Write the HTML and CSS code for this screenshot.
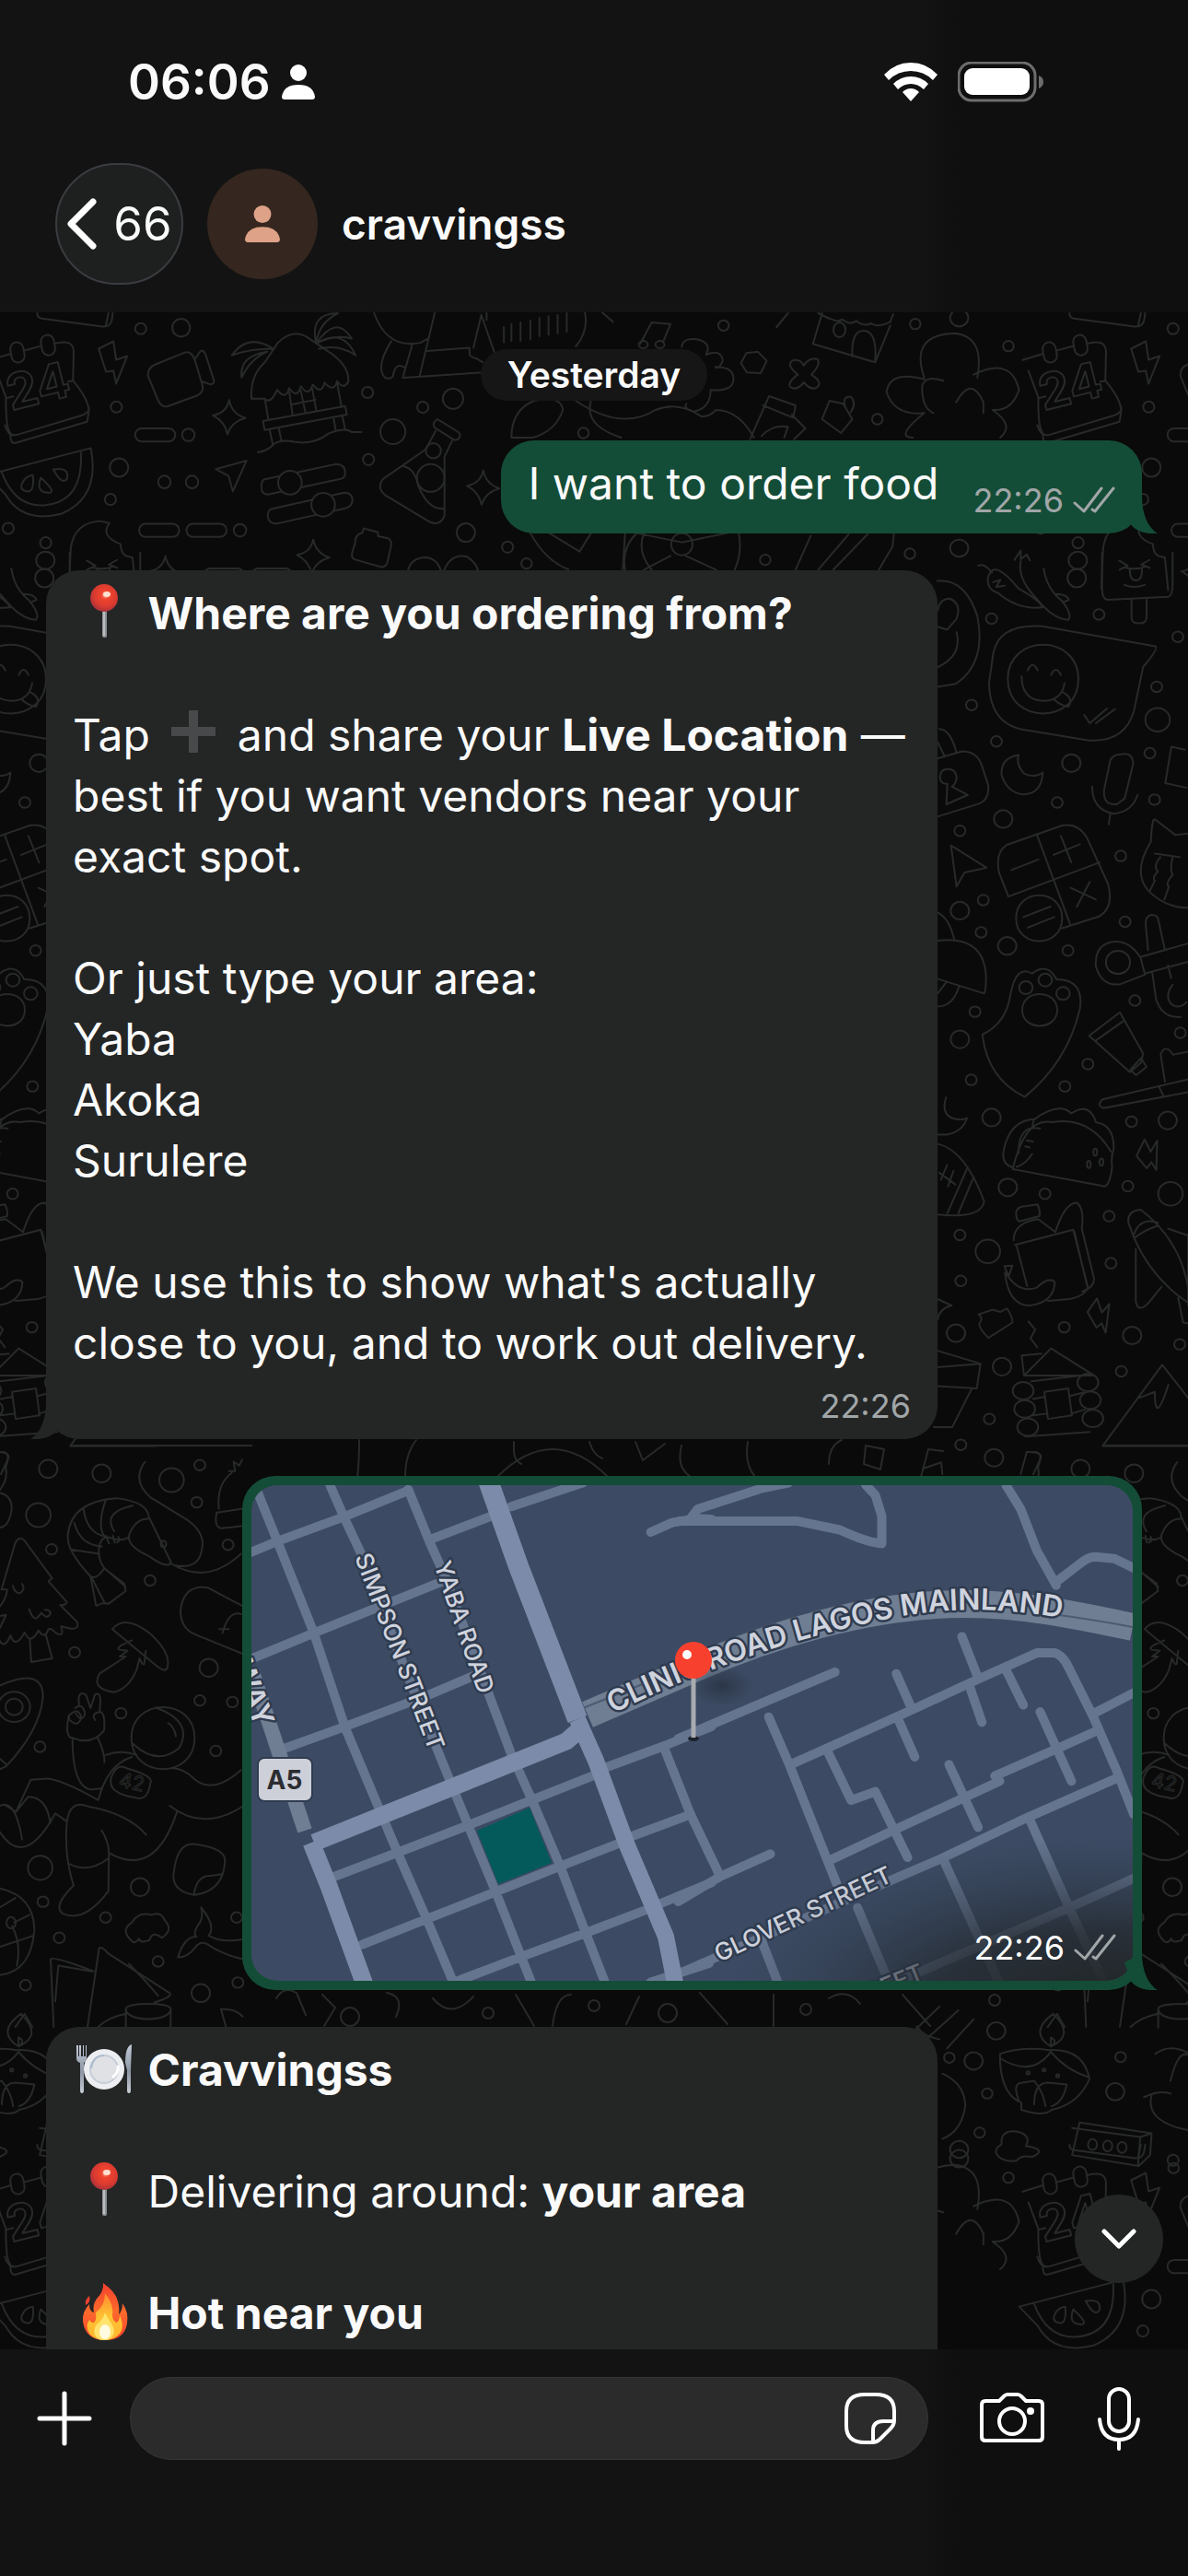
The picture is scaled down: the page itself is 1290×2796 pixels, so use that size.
FILE: index.html
```html
<!DOCTYPE html>
<html lang="en">
<head>
<meta charset="utf-8">
<meta name="viewport" content="width=device-width, initial-scale=1">
<title>cravvingss</title>
<link rel="stylesheet" href="styles.css">
</head>
<body>
<svg class="sprite" aria-hidden="true">
  <defs>
    <radialGradient id="pin-red" cx=".55" cy=".4" r=".6"><stop offset="0" stop-color="#ffb49a"/><stop offset=".25" stop-color="#f0442e"/><stop offset=".7" stop-color="#d93a30"/><stop offset="1" stop-color="#a8323a"/></radialGradient>
    <linearGradient id="flame" x1="0" y1="0" x2="0" y2="1"><stop offset="0" stop-color="#f4402c"/><stop offset=".5" stop-color="#fb6a2c"/><stop offset="1" stop-color="#f8402c"/></linearGradient>
    <linearGradient id="flame-in" x1="0" y1="0" x2="0" y2="1"><stop offset="0" stop-color="#ff8a2f"/><stop offset=".5" stop-color="#ffc233"/><stop offset="1" stop-color="#ffb52e"/></linearGradient>
    <linearGradient id="steel" x1="0" y1="0" x2="0" y2="1"><stop offset="0" stop-color="#c3cbd8"/><stop offset=".55" stop-color="#8b95a3"/><stop offset="1" stop-color="#c9ced6"/></linearGradient>
  </defs>
  <symbol id="pushpin" viewBox="0 0 66 66"><rect x="31" y="31" width="5" height="30" rx="2" fill="#8d9294"/><rect x="32" y="31" width="2" height="28" fill="#b9bdbf"/><circle cx="33" cy="18" r="15" fill="url(#pin-red)"/><ellipse cx="36" cy="14" rx="4" ry="3" fill="#ffe0d0"/></symbol>
  <symbol id="plus-emoji" viewBox="0 0 66 66"><path d="M28 8h10v18h19v10H38v18H28V36H9V26h19z" fill="#47494b"/></symbol>
  <symbol id="plate" viewBox="0 0 66 66"><path d="M3 8v14q0 4 4 5v30q0 3 2 3t2-3V27q3-2 3-5V8h-1v12h-2V8h-1v12H8V8H6v12H5V8z" fill="url(#steel)"/><path d="M63 7q-7 2-7 20l2 8v22q0 3 2 3t2-3V34z" fill="url(#steel)"/><circle cx="33" cy="34" r="22" fill="#eceef1"/><circle cx="33" cy="34" r="15" fill="#dfe1e4" stroke="#c6cdd8" stroke-width="2"/><path d="M19 33q2-14 14-14" fill="none" stroke="#aebccd" stroke-width="2"/><path d="M48 30q1 8-6 13" fill="none" stroke="#fff" stroke-width="3"/></symbol>
  <symbol id="fire" viewBox="0 0 66 66"><path d="M32 2q14 10 16 20 2 8 1 14 4-4 4-12 7 10 5 22-3 18-24 18T10 44q-1-11 7-19 0 8 5 9-2-8 3-15 8-8 7-17z" fill="url(#flame)"/><path d="M17 16q-5 4-4 10 6-3 4-10z" fill="#f4402c"/><path d="M34 13q10 12 8 25 1 6 5 7 3-3 3-8 6 14-1 21-6 6-16 6T17 57q-5-8 0-15 3 5 6 2 2-3 1-10 10-7 10-21z" fill="url(#flame-in)"/><path d="M34 34q4 8 7 12 5 8 1 14-3 4-9 4t-9-4q-4-6 1-13 7-5 9-13z" fill="#ffe36b"/><ellipse cx="34" cy="55" rx="6" ry="8" fill="#fffbe0"/></symbol>
  <symbol id="ticks" viewBox="0 0 46 30"><path d="M2 18l10 9L31 2M21 25l3 2L44 2" fill="none" stroke="currentColor" stroke-width="3" stroke-linecap="round" stroke-linejoin="round"/></symbol>
  <symbol id="person" viewBox="0 0 36 38"><ellipse cx="18" cy="9" rx="9" ry="9"/><path d="M0 35Q2 22 18 22T36 35Q36 38 33 38H3Q0 38 0 35z"/></symbol>
  <symbol id="tail" viewBox="0 0 36 40"><path d="M19 0C19 20 26 34 36 40 24 41 12 38 7 30L0 10z"/></symbol>
</svg>

<header class="topbar">
  <div class="status">
    <span class="clock">06:06</span>
    <svg class="status-person" fill="#fff" aria-hidden="true"><use href="#person"/></svg>
    <svg class="wifi" viewBox="0 0 58 42" fill="#fff" aria-hidden="true"><path d="M0 13Q12 0 29 0t29 13l-5 6Q43 9 29 9T5 19z"/><path d="M10 23q8-8 19-8t19 8l-5 6q-6-6-14-6t-14 6z"/><path d="M20 32q4-4 9-4t9 4l-9 10z"/></svg>
    <svg class="battery" viewBox="0 0 94 44" aria-hidden="true"><rect x="1" y="1" width="83" height="41" rx="14" fill="none" stroke="#6d6d6d" stroke-width="3"/><rect x="7" y="7" width="71" height="29" rx="9" fill="#fff"/><path d="M88 15q5 2 5 7t-5 7z" fill="#6d6d6d"/></svg>
  </div>
  <div class="contact">
    <button class="back" aria-label="Back, 66 unread chats"><svg viewBox="0 0 34 58" aria-hidden="true"><path d="M29 5L5 29l24 24" fill="none" stroke="#fff" stroke-width="7" stroke-linecap="round" stroke-linejoin="round"/></svg><span>66</span></button>
    <span class="avatar"><svg fill="#dea288" aria-hidden="true"><use href="#person"/></svg></span>
    <h1>cravvingss</h1>
  </div>
</header>

<main class="chat">
  <svg class="wallpaper" aria-hidden="true">
    <defs>
      <path id="star" d="M0-20Q3-4 19 1 3 5-2 20-5 5-19-2-3-5 0-20z"/>
      <path id="bolt" d="M-16-14L0-22 3-2 15-6 3 24 0 10-8 11z"/>
      <path id="send" d="M-18-10L18-20 2 16-3-2z"/>
      <g id="doodles">
        <g transform="translate(0 1) scale(.357)">
          <path d="M113 0q0 14 14 16l180 24q30 5 34-25l2-15M330 0l-8 36"/>
          <path d="M-30 142l60-18M75 113l48-13M168 92q55-15 56 25l-2 88q50 60 48 95l-5 30-220 65q-15 0-13-30-15-15-14-110l-30-80M222 205l-15 3M20 258l20-5M15 340q10 35 35 30l200-60q25-10 20-25"/>
          <rect x="33" y="88" width="40" height="62" rx="20" transform="rotate(-10 53 119)"/><rect x="126" y="66" width="40" height="62" rx="20" transform="rotate(-10 146 97)"/>
          <text x="34" y="296" transform="rotate(-14 34 296)">24</text>
          <use href="#bolt" transform="translate(345 147) scale(2.8)"/>
          <path d="M450 190q0-25 20-33l90-37q20-8 32 20l24 80q4 20-16 30l-90 33q-20 5-30-20zM592 140l18-25q8-5 15 10l26 80q0 12-12 11l-24-8"/>
          <path d="M765 260q-5-70 40-110l40-60q50-50 100-10l50 34q70 45 64 95-15 25-34-3-8 38-38 5-8 38-36 6-12 40-36 5-10 40-36 6-10 38-36 5-20 45-38 27zM705 128q50-70 126-20-70 0-126 20zM735 195q-8-65 78-78-50 20-78 78zM962 92Q940 0 1028 0q-60 30-66 92 60-90 108-15-50-15-108 15 80-50 120 36-50-35-112-20M806 262l10 60M880 240l10 70M950 230l12 66M915 236l14 66M885 278l75-15M1025 208l14 78M800 328l250-46 5 26-250 47zM820 355l10 45M848 350l8 38M1015 320l6 36M1042 316l8 38M784 422q25 0 50-25 20-15 60-6 60 10 105-25 50-20 70-5l30 0"/>
          <use href="#star" transform="translate(697 316) scale(2.6)"/><use href="#send" transform="translate(703 500) scale(2.6)"/>
          <rect x="411" y="350" width="122" height="40" rx="20"/><rect x="423" y="640" width="122" height="40" rx="20"/><rect x="567" y="640" width="122" height="40" rx="20"/><rect x="620" y="776" width="122" height="40" rx="20"/><rect x="766" y="776" width="122" height="40" rx="20"/>
          <path d="M-40 492L276 410q30 150-90 200-120 30-170-60zM4 480q40 110 130 104 120-10 112-160M66 520q10-26 34-28 6 60-24 48-14-5-10-20zM124 500q50 45 24 46-40 0-24-46zM162 475q50-8 42 28-15 22-42-28z"/>
          <path d="M805 505l215-46q30 0 30 26 0 18-20 20l-215 46q-20 0-20-23 0-20 10-23zM825 595l215-48q30-5 32 20 0 20-22 26l-205 46q-25 3-30-18-2-20 10-26z" fill="#0a0a0a"/><circle cx="882" cy="515" r="36" fill="#0a0a0a"/><circle cx="983" cy="582" r="36" fill="#0a0a0a"/>
          <path d="M1330 322l62 38q12 8 4 20-6 8-16 4l-55-34q-15-14 5-28zM1325 358l-30 56-130 90q-20 25 5 48l140 84q30 10 42-20l0-180 25-52M1222 464q40 5 50 60 30 75 80 70"/><circle cx="1318" cy="418" r="23"/><circle cx="1310" cy="501" r="42"/>
          <path d="M1138 0q40 110 140 90l22-12M1322 0l-45 188M1225 196l30-105M1190 85q-50 80-18 112 25 5 25-15 8-32 32-18M1298 115l130-10v20q5 10 20 12l20 12M1228 196l240-16M1440 105l24-100 40 115M1480 20l0-20"/>
          <path d="M1080 700q0-30 22-32l4-14 44 12v12l30 6q15 8 8 30l-10 45q-6 15-20 12l-78-22q-14-4-8-24z"/>
          <path d="M210 836l5-120q10-80 90-84l28 6q-30 40 34 64 0 40 36 40l10 100M264 752l26 16-25 12M356 750l-25 14 26 10M280 826q30 12 62 0"/>
          <use href="#star" transform="translate(503 790) scale(2.6)"/><use href="#star" transform="translate(953 740) scale(2.6)"/><use href="#star" transform="translate(1470 530) scale(2.6)"/>
          <path d="M1240 836q-12-90 50-94 45 0 55 56 20-70 75-58 50 30 34 96M1455 800q40 0 70 40"/>
          <circle cx="428" cy="47" r="17"/><circle cx="551" cy="44" r="27"/><circle cx="354" cy="285" r="17"/><circle cx="573" cy="370" r="19"/><circle cx="362" cy="469" r="28"/><circle cx="500" cy="513" r="19"/><circle cx="584" cy="513" r="19"/><circle cx="336" cy="566" r="17"/><circle cx="730" cy="660" r="19"/><circle cx="1118" cy="241" r="17"/><circle cx="1378" cy="260" r="31"/><circle cx="1286" cy="286" r="17"/><circle cx="1195" cy="360" r="38"/><circle cx="1121" cy="445" r="17"/><circle cx="25" cy="654" r="17"/><circle cx="139" cy="698" r="17"/><circle cx="135" cy="805" r="28"/><circle cx="1417" cy="667" r="28"/><circle cx="1544" cy="711" r="17"/><circle cx="1035" cy="838" r="26"/>
        </g>
        <g transform="translate(0 -9) scale(.8227 .3333)">
          <path d="M665 75v50M675 65v55M687 60v60M700 55v60M712 45v60M724 40v60M736 35v60M748 30v60M772 28q5 60-12 110M795 28l14 30M845 130l15-70 25 5-10 60"/><ellipse cx="849" cy="132" rx="6" ry="12"/><ellipse cx="871" cy="132" rx="6" ry="12"/>
          <path d="M900 140q0-30 20-25 20 10 12 50 20-20 22 20-5 30-10 20 25 0 24 40 0 40-30 35 0 60-22 70-15-10-10-25M985 160l15-5 12 30-8 40-18-2-8-30zM1045 185q10-10 16 15 8-30 18-20 5 15-8 50 15 25 8 40-8 15-18-15-10 30-18 15-4-15 10-40-15-30-8-45zM1025 75l15-45M1085 30l-12 100 82 60 20-120M1080 30q12 15 18 20 8 10 14 0 10 20 18 5 10 20 20 8 8 15 25-5l4-25M1125 170q-2-90 18-82 15 10 12 100"/>
          <path d="M1220 245q-45-30-50 40 10 80 50 70-40 80-15 80M1220 240q-20-140 40-145 40 10 30 145M1245 250q-25-20-28 20 0 70 15 85M1285 230q50-60 60 50-10 70-35 65 30 50 10 90M1262 320q20-90 36 0l0 35"/>
          <path d="M675 435q0-90 30-120 35-20 38 30-10 70-40 90zM780 315q-10 80 40 120M760 315q60 100 105 30 30-30 60 20 10 5 20-20 30 0 50 90M990 440l25-140 35 30-3 40-40-40M1005 430q15-40 35-30l-5 35M1045 360l18 45-15 35M1085 375l10-60 18 10 12 50-15 45zM1115 330q-3-30 8-28 8 20 0 50"/>
          <path d="M700 746q20 90 50 118M725 746l40 60 15-60M825 865q-5-70 15-118M860 865q-20-60-10-118M975 746q5 60-5 118M840 746l60 30 60-30M905 820l40 45M885 820l-35 45M1050 865l20-110M1080 865l40-115M1100 865l45-115M1160 865l18-75 2-44M825 746l-3 118"/><ellipse cx="900" cy="782" rx="14" ry="36"/>
          <ellipse cx="955" cy="70" rx="7" ry="17"/><ellipse cx="1108" cy="84" rx="8" ry="24"/><ellipse cx="1208" cy="65" rx="7" ry="17"/><ellipse cx="1266" cy="45" rx="12" ry="28"/><ellipse cx="1331" cy="137" rx="7" ry="17"/><ellipse cx="1158" cy="375" rx="7" ry="17"/><ellipse cx="770" cy="420" rx="7" ry="17"/><ellipse cx="695" cy="845" rx="7" ry="17"/><ellipse cx="1010" cy="833" rx="7" ry="17"/><ellipse cx="1201" cy="813" rx="7" ry="17"/><ellipse cx="1266" cy="795" rx="12" ry="28"/>
        </g>
        <g transform="translate(1000 261) scale(.3333 .6378)">
          <path d="M187 22q20-5 44 12M250 68q-35-5-32-25 10-20 40-12 30 10 60 30 70 20 78 32-80 5-146-25zM235 50l24-4-14 12 28-2M305 12l20-16 0 15 20-8 10 10M325 14q-10 30 45 60 60 40 110 40 15-8-20-32-50-20-60-55M440 70q35 0 42 10l-20 5"/>
          <path d="M590 0v60q0 20 20 20l195-5q15-2 15-22V0M665 25q35 5 70-2M680 27q0 20 20 20 22 0 20-20M686 80v30q0 10 25 10 24 0 24-10V80"/>
          <path d="M54 48q90-5 130 60 30 80-70 115l-60 5M55 98q5-20 40-20 40 10 20 35l-30 18-30-5M116 135q20 40-62 60"/>
          <path d="M236 170q20-50 160-45l368 34q10 5-40 35l-30 75q-30 55-150 50l-210-18q-110-10-112-80zM283 215c0-78 230-78 230 0s-230 78-230 0zM348 200q15-18 32 0M424 208q15-18 32 0M328 210q0 40 70 42 60 0 70-30M435 250q20 10 45 12 20-15-20-25M532 276l18 14 56-25M570 290l62-24"/>
          <path d="M54 350l80-12q50 0 65 25l20 32q5 25-30 32l-135 22M54 322l24 25M60 300q35 0 56 40M62 382q0-14 26-14t28 14q0 10-15 16l52 14-70 16 3-35q-24 0-24-11z"/>
          <path d="M318 344q-60 5-55 35 20 30 70 32 60 0 64-37-25 10-60 2-28-15-19-32zM598 400q-10 30 40 28l26-10 28-60q-5-20-40-15-25 0-35 10zM558 398q0 40 70 46 60-3 78-32M617 444l-5 18M860 335l-44-5-20 62 70 8"/>
          <path d="M98 498l18 70 26-24 72-8zM285 585l-30-40q-15-35 25-48l180-33q50-5 80 20l70 80q20 40-30 55l-120 20M378 480l108 152M285 585l297-58M295 540l88-18M432 514l86-18M456 482l34 45M488 570l82 20M508 602l42-42M310 622c0-52 150-52 150 0s-150 52-150 0zM334 620l88-18M348 638l86-18"/>
          <path d="M870 478l-42 2-65-26q-10-5-14 38-60 50-10 82 60 32 140 30M762 512l82 6M780 518q-25 15-8 25-20 10-10 15l-15 16M820 518q-10 20 0 30-25 15-12 20l-15 22"/>
          <path d="M715 688q-40-30-90-26-60 5-55 42 20 35 80 30l80-16zM603 697c0-26 78-26 78 0s-78 26-78 0zM715 688l160-24M730 716l140-20M740 676l-8-45q0-14 20-15 20 0 22 10l20 48M754 715l12 45q20 32 80 30M805 702l10 22M820 735c-40 25 10 50 45 30M54 612q40 10 55 48M54 660q150-10 158 60 0 25-6 30l-152-25M54 772q50 0 70-34M54 750l30-20"/>
          <path d="M200 820q80-20 92-70 20-50 70-34 50-20 80 10 90 0 76 50-40 90-180 150-120-30-138-106zM330 778c0-36 114-36 114 0s-114 36-114 0zM548 822l100-40 76 70-7 16-36 16zM570 830l92-34M682 880l35-20 18 15-34 14zM795 900l-14-46q15-20 40 0l50-5M592 930l280-34M775 908l14 15M870 918l-275 27q-25-5-3-15"/>
          <path d="M54 990l32 0q50-5 64-28-20 5-50 0-35-10-18-35M54 1006q90 10 152 98-10 30-152 22M60 1055l52 20M85 1042l-20 25M106 1052l-18 26M152 1046l-66 78M172 1062l-50 62"/>
          <path d="M300 1046q-40-5-30-30 20-50 100-52 80-30 120-10 60-20 80 15 60 5 58 46-10 15-5 30-10 40-34 32l-290-28q40-90 130-80 120-10 190 50M368 964l-5 12M318 1022q0-50 70-42M345 1000l20 2M340 1010l14 2M312 1045q30-5 50-22"/>
          <path d="M310 1122q5-10 30-10l40-3q10 12 6 20l-66 9q-10-2-10-16zM302 1170q0-30 80-36l56 22q30-50 70-50 25 10 16 44M306 1178l190-26 48 98q-10 15-60 20l-70 3M312 1180l34 68M500 1155l40 90M524 1150l40 85q0 15-38 22M272 1214l26-1-12 18zM274 1225q10 55 80 56 80-5 82-40-20-10-60 10-60 10-100-26"/>
          <path d="M54 1270l46 11q-40 5-46 24M188 1296l46-8 24 4 22-6q20 15 18 24l-78 26q-30-15-30-24 15-10-2-16zM676 1140q-5-20 40-22 150 60 160 160-120-40-180-110zM700 1185v90q10 20 44 0l40-26M694 1160q20-30 78-20M698 1165q40-15 76-20M838 1268l16 42 20 2M805 1150l65 12M870 1160v120"/>
          <path d="M54 1358l140 22-12 42-128-4M194 1380l-140 6M166 1422l-64 66-60 0M350 1308l22 14-15 15 22 15M336 1400l-8-34 64-3M336 1400l88-46 140 46zM360 1410l160-10M365 1440l40-4M485 1435l44-6M365 1468l44-3M490 1465l44-7M340 1504l210-8M402 1428l78-6 12 46-78 6z"/><ellipse cx="333" cy="1426" rx="34" ry="15"/><ellipse cx="338" cy="1457" rx="34" ry="15"/><ellipse cx="348" cy="1488" rx="34" ry="15"/><ellipse cx="544" cy="1412" rx="34" ry="15"/><ellipse cx="552" cy="1442" rx="34" ry="15"/><ellipse cx="560" cy="1473" rx="34" ry="15"/>
          <path d="M592 1520l194-138 84 56M712 1438l50-10q0 60 44-12M592 1520h280M325 1568l20-38q50 0 46 10l-25 28M10 1558l56-10 4 20"/>
          <use href="#bolt" transform="translate(744 1025) rotate(-30) scale(2.3 1.4)"/><use href="#bolt" transform="translate(584 1298) rotate(-20) scale(2.3 1.4)"/>
          <ellipse cx="511" cy="13" rx="30" ry="15"/><ellipse cx="230" cy="112" rx="18" ry="9"/><ellipse cx="580" cy="105" rx="18" ry="9"/><ellipse cx="837" cy="143" rx="18" ry="9"/><ellipse cx="768" cy="228" rx="18" ry="9"/><ellipse cx="771" cy="284" rx="40" ry="20"/><ellipse cx="165" cy="259" rx="18" ry="9"/><ellipse cx="246" cy="321" rx="18" ry="9"/><ellipse cx="490" cy="358" rx="30" ry="15"/><ellipse cx="746" cy="341" rx="18" ry="9"/><ellipse cx="444" cy="425" rx="18" ry="9"/><ellipse cx="761" cy="420" rx="18" ry="9"/><ellipse cx="268" cy="453" rx="30" ry="15"/><ellipse cx="127" cy="473" rx="18" ry="9"/><ellipse cx="651" cy="516" rx="18" ry="9"/><ellipse cx="203" cy="591" rx="18" ry="9"/><ellipse cx="127" cy="609" rx="30" ry="15"/><ellipse cx="665" cy="628" rx="18" ry="9"/><ellipse cx="196" cy="646" rx="18" ry="9"/><ellipse cx="281" cy="669" rx="30" ry="15"/><ellipse cx="479" cy="677" rx="18" ry="9"/><ellipse cx="342" cy="740" rx="22" ry="11"/><ellipse cx="405" cy="727" rx="22" ry="11"/><ellipse cx="463" cy="750" rx="22" ry="11"/><ellipse cx="697" cy="762" rx="18" ry="9"/><ellipse cx="845" cy="817" rx="18" ry="9"/><ellipse cx="176" cy="781" rx="18" ry="9"/><ellipse cx="127" cy="828" rx="30" ry="15"/><ellipse cx="544" cy="870" rx="18" ry="9"/><ellipse cx="164" cy="897" rx="18" ry="9"/><ellipse cx="469" cy="908" rx="18" ry="9"/><ellipse cx="230" cy="961" rx="30" ry="15"/><ellipse cx="686" cy="968" rx="18" ry="9"/><ellipse cx="804" cy="966" rx="30" ry="15"/><ellipse cx="283" cy="1080" rx="30" ry="15"/><ellipse cx="404" cy="1091" rx="18" ry="9"/><ellipse cx="674" cy="1078" rx="18" ry="9"/><ellipse cx="813" cy="1091" rx="40" ry="20"/><ellipse cx="127" cy="1161" rx="18" ry="9"/><ellipse cx="613" cy="1129" rx="18" ry="9"/><ellipse cx="218" cy="1189" rx="40" ry="20"/><ellipse cx="619" cy="1209" rx="18" ry="9"/><ellipse cx="130" cy="1239" rx="18" ry="9"/><ellipse cx="467" cy="1318" rx="18" ry="9"/><ellipse cx="114" cy="1328" rx="30" ry="15"/><ellipse cx="688" cy="1332" rx="30" ry="15"/><ellipse cx="843" cy="1347" rx="18" ry="9"/><ellipse cx="264" cy="1385" rx="30" ry="15"/><ellipse cx="653" cy="1393" rx="18" ry="9"/><ellipse cx="223" cy="1474" rx="18" ry="9"/><ellipse cx="130" cy="1518" rx="18" ry="9"/><ellipse cx="238" cy="1540" rx="30" ry="15"/>
          <circle cx="547" cy="1041" r="6"/><circle cx="588" cy="1037" r="6"/><circle cx="568" cy="1020" r="6"/>
        </g>
        <g transform="translate(0 1221) scale(.3333 .4082)">
          <path d="M0 40q40-5 18 40 10 30-18 60M0 148q50 10 34 60-10 30-34 32M240 22h580"/>
          <path d="M5 405L50 280q15-20 30-5l90 100-12 8 60 55q-5 10-22 8l55 45q8 20-20 18l-32-6q12 30-16 18-25-20-28-5-10 20-30-2-25 40-45 5-30 45-46 8-20 40-38 10M5 405h18q0 20-23 45M97 538l5 60 68-10-20-60M42 395q5 18 22 20 20-10 8-25M95 457q15 35 30 20l10-10q20 20 30 0-5-10-20-8M0 475l20-3-20 35"/>
          <path d="M295 370q-80-70-74-110 10-90 160-98 100 10 104 50l72 120q-10 20-70-15-80-30-65-60 20-40 60-40M340 348q-20-20-18-50 5-40 40-30 30 10 58-2M295 370q20 10 45-22M295 370l18 78 26-8 14 3 56-34-4-20-65-40M298 372l44 70M340 348l70 50M230 298l92 12M242 228q20 60 90 62M272 190q10 60 62 72M345 165q-30 70-5 98M372 250q-40-50 60-68M345 262l10 20M368 262l5 18M385 265q10 10-5 15"/>
          <path d="M472 66q-45 50 20 95l120 60q60 35 45 80-10 50-85 40M555 335q120 60 230-25M532 275a8 8 0 1 0 1 18 8 8 0 0 0-1-18M746 90l20 0-5-25 18 10 10-15M755 95q-50 30-42 95M706 200q-10 40 15 42l70-6M706 200l85-10"/>
          <path d="M366 510q40-40 120 10 70 50 60 90-5 20-40-5-60-40-140-95zM430 540q-60 20-40 25l25 3-25 15 20 0-85 45q-30 40 45 50 50-10 75-60l10-30q10 20 15 15l5-35M588 460q10-70 90-60l115 50M588 460q0 50 50 65l150 50M725 520q20-60 60-50M715 510h30"/>
          <path d="M0 660q140-50 140 30-10 90-120 185l-20 8M0 855l22 16"/><ellipse cx="46" cy="717" rx="52" ry="40"/><ellipse cx="46" cy="717" rx="28" ry="22"/>
          <path d="M224 740q-15 60 15 60 60 20 100-20 5-50-15-50 10-60-15-45l-14 35-15-35q-30-15-22 30M225 740q30-25 40 5-10 30-40 5zM245 720q25-15 32 15-10 25-30 0M325 730q-30 5-15 22M236 800q0 130 60 137l32-3M318 798q25 45 22 66M345 845q50-15 100 0M430 850q-80 20-110 115-130-60-175-57l-45 3-48 85-35-18M92 956q60 0 72 70M52 996l40-40M0 980q50-20 72 90M0 1050q80 100 180-50l35 20M218 1022q10-60 70-40 130 20 188 75M218 1022q-10 90 22 170-70 55-35 75 70 25 148-60l2-100q0-30-24-62M228 1135q60 25 125-15M355 1105q150 70 222-110M553 980q110 70 240 0M560 880q40 0 75 30 60 40 150-25M362 905q20-40 50-25 90 20 78 40-10 50-50 38-90-10-78-53zM428 800c0-110 206-110 206 0s-206 110-206 0zM433 815q80 60 150 12 50-70-75-108M548 760q20 10 25 35"/>
          <path d="M565 1165q10-90 70-83 100 10 98 45-5 80-100 90-70-10-68-52zM632 1214q10-50 55-48l35-4M430 1340q-40-30 0-50 20-30 65-20 30-10 42 15 30 25-10 46-30-20-40 6-30 10-35-4-10 15-22 7zM655 1250q50 50 25 75 40 20 110 10M580 1383q30 0 55-25 20-25 50-5 50 25 108 35M655 1250q10 30-12 50-15 20-3 28-40 0-60 55"/>
          <path d="M0 1200q110 20 112 110-10 110-112 120M0 1250l50-25M0 1355l110-30M46 1290l50-20M40 1300q30 50 15 105"/><circle cx="36" cy="1291" r="15"/>
          <path d="M175 1568l-10-180q5-10 140 32M180 1500l10-95 110 15M285 1568l38-210q10-5 30 15l200 105q10 10-50 25M420 1400q60 50 95 85M320 1568q30-25 90-35M410 1520c0-18 146-18 146 0v50M410 1520v50M410 1520c0 36 146 36 146 0M50 1568l30-35 25 35M720 1520q50 0 70 20M720 1520l20 60"/>
          <ellipse cx="157" cy="84" rx="30" ry="24"/><ellipse cx="331" cy="96" rx="30" ry="24"/><ellipse cx="559" cy="114" rx="40" ry="32"/><ellipse cx="651" cy="74" rx="18" ry="14"/><ellipse cx="125" cy="207" rx="40" ry="32"/><ellipse cx="641" cy="173" rx="18" ry="14"/><ellipse cx="743" cy="286" rx="18" ry="14"/><ellipse cx="168" cy="298" rx="18" ry="14"/><ellipse cx="489" cy="381" rx="18" ry="14"/><ellipse cx="243" cy="572" rx="18" ry="14"/><ellipse cx="680" cy="613" rx="30" ry="24"/><ellipse cx="651" cy="700" rx="18" ry="14"/><ellipse cx="757" cy="704" rx="18" ry="14"/><ellipse cx="394" cy="734" rx="18" ry="14"/><ellipse cx="130" cy="823" rx="18" ry="14"/><ellipse cx="703" cy="834" rx="18" ry="14"/><ellipse cx="131" cy="1145" rx="40" ry="32"/><ellipse cx="456" cy="1196" rx="30" ry="24"/><ellipse cx="140" cy="1235" rx="18" ry="14"/><ellipse cx="344" cy="1277" rx="18" ry="14"/><ellipse cx="193" cy="1331" rx="18" ry="14"/><ellipse cx="771" cy="1277" rx="18" ry="14"/><ellipse cx="515" cy="1394" rx="18" ry="14"/><ellipse cx="83" cy="1457" rx="18" ry="14"/><ellipse cx="654" cy="1478" rx="30" ry="24"/><ellipse cx="775" cy="1450" rx="18" ry="14"/>
        </g>
        <text class="small" x="128" y="1600" transform="rotate(12 128 1600)">42</text>
        <path d="M390 1224q0 25-2 40M440 1264q0-25 12-40M540 1264q60-60 120 0M558 1226v10q0 10 8 14M640 1226q4 14 14 18M690 1226l8 20 24-18M740 1230q-6 24 10 34M812 1226q-4 24 8 38M900 1250q0-20 14-26M940 1230l20 4-4 22-18-6zM1000 1264l8-30 16 2"/>
        <path d="M300 1830q8-14 22-6l10 24M350 1826l14 14-12 20M420 1824q20 4 10 26M470 1830q20 24 44-2M560 1826l20 34M600 1860q4-34 20-34M680 1858l14-30M760 1824l30 34M840 1826v34M900 1830q20-12 34 6M980 1826l30 34"/><circle cx="380" cy="1850" r="10"/><circle cx="530" cy="1846" r="6"/><circle cx="645" cy="1838" r="6"/><circle cx="725" cy="1846" r="10"/><circle cx="875" cy="1842" r="6"/><circle cx="1080" cy="1832" r="6"/>
        <g transform="translate(0 1841) scale(.8227 .3929)">
          <path d="M1244 180q30 30 30 90-5 70-30 90M1320 125q30-20 65-10 45-5 53 80-15 70-50 85-10 20-40 0v-20q-25-20-28-110zM1322 140q40 50 65-20 20 50 50 70M1387 105q-30-40 3-90 30 60-3 90zM1387 100v-20q10 10 0 25M1345 255q-10-50 5-50 0 0 15-5 12 30 15 70M1365 265q0-60 18-60l25 5q-5 50-20 60M1205 65l35-70M1225 80l40-75M1250 110l35-80M1210 50q10 30 30 35M1425 315l95 30-2 60-15 30-88-30zM1415 330l90 25M1505 355l-3 80M1505 355l15-10M1322 415q-15-20 0-40-2-40 20-35 20 10 12 40 30 10 8 30-15-5-20 10-10 5-20-5zM1525 125q20-30 45 0M1545 200q10-90 25-70M1510 245q20-20 35-10M1520 240q-10 80 60 100"/>
          <ellipse cx="1442" cy="376" rx="6" ry="15"/><ellipse cx="1462" cy="380" rx="6" ry="15"/><ellipse cx="1481" cy="384" rx="6" ry="15"/><ellipse cx="1315" cy="62" rx="12" ry="24"/><ellipse cx="1253" cy="136" rx="7" ry="14"/><ellipse cx="1285" cy="145" rx="12" ry="24"/><ellipse cx="1479" cy="134" rx="7" ry="14"/><ellipse cx="1303" cy="235" rx="7" ry="14"/><ellipse cx="1472" cy="230" rx="12" ry="24"/><ellipse cx="1293" cy="343" rx="7" ry="14"/><ellipse cx="1266" cy="415" rx="12" ry="24"/><ellipse cx="1549" cy="441" rx="7" ry="14"/><ellipse cx="1357" cy="178" rx="2" ry="4"/><ellipse cx="1378" cy="170" rx="2" ry="4"/><ellipse cx="1396" cy="186" rx="2" ry="4"/>
        </g>
      </g>
    </defs>
    <use href="#doodles" x="-1121"/><use href="#doodles"/><use href="#doodles" x="1121"/><use href="#doodles" y="1988"/><use href="#doodles" x="1121" y="1988"/>
  </svg>

  <time class="day">Yesterday</time>

  <article class="bubble out short">
    <p>I want to order food</p>
    <span class="meta"><time>22:26</time><svg class="ticks" aria-label="Delivered"><use href="#ticks"/></svg></span>
    <svg class="tail" aria-hidden="true"><use href="#tail"/></svg>
  </article>

  <article class="bubble in">
    <p><svg class="emoji" aria-label="pushpin"><use href="#pushpin"/></svg> <b>Where are you ordering from?</b></p>
    <p>Tap <svg class="emoji" aria-label="plus"><use href="#plus-emoji"/></svg> and share your <b>Live Location</b> —<br>best if you want vendors near your<br>exact spot.</p>
    <p>Or just type your area:<br>Yaba<br>Akoka<br>Surulere</p>
    <p>We use this to show what's actually<br>close to you, and to work out delivery.</p>
    <span class="meta"><time>22:26</time></span>
    <svg class="tail" aria-hidden="true"><use href="#tail"/></svg>
  </article>

  <article class="bubble out location">
    <svg class="map" viewBox="0 0 957 538" role="img" aria-label="Map of Clinic Road, Lagos Mainland">
      <defs>
        <radialGradient id="shade" gradientUnits="userSpaceOnUse" cx="0" cy="0" r="1" gradientTransform="translate(930 570) scale(420 190)"><stop offset="0" stop-color="#1f2322" stop-opacity="1"/><stop offset=".45" stop-color="#23282d" stop-opacity=".8"/><stop offset="1" stop-color="#2c3a4e" stop-opacity="0"/></radialGradient>
        <radialGradient id="drop"><stop offset="0" stop-color="#2a3445" stop-opacity=".9"/><stop offset="1" stop-color="#2a3445" stop-opacity="0"/></radialGradient>
        <path id="clinic" d="M393 248C480 203 600 161 713 141 770 132 830 133 910 150"/>
      </defs>
      <rect width="957" height="538" fill="#3c4b63"/>
      <g class="minor" transform="translate(-23 -23) scale(.3333 .37)">
        <path d="M80 62L155 230 270 490 375 775 545 1140 640 1335 725 1517M325 62L370 155 430 270 560 580 680 850 775 1060 865 1255 950 1450 985 1530M580 75L650 230 700 330 840 670 915 850 985 990 1075 1180 1160 1380 1225 1530M60 262L150 228 370 155 580 78M650 222L845 155M915 125L1150 55M60 575L275 495 690 345M160 840L375 770 640 680 810 615M340 1210L545 1140 775 1060 985 985 1180 915M1225 890L1420 825 1568 770M430 1410L640 1335 865 1255 1075 1180 1260 1115M1315 1090L1500 1028M740 1517L950 1445 1160 1375 1350 1310M1400 1290L1568 1228M1370 1520L1560 1465M1370 200L1440 172 1520 160 1568 162"/>
      </g>
      <g class="minor" transform="translate(467 -23) scale(.3508 .3763)">
        <path d="M-10 792L475 600M270 730L335 870 480 1210M335 868L450 820 700 715 920 620 1100 545H1155Q1180 550 1200 590L1275 730 1345 880 1400 1010M450 825L525 970 600 945 655 1050 700 1135M665 605L710 700M670 735L722 845M868 498L915 610M893 645L930 745M1005 595L1058 695M1110 715L1207 915M828 867L918 1048M455 1145L660 1055 985 915 970 900 1165 820 1285 770M1275 720L1400 660M5 1465L650 1200 800 1140 1070 1020 1350 905M810 1140L985 1500M1075 1020L1200 1280 1310 1500M545 1280L635 1480M250 1380L300 1500M600 1520L750 1460 1200 1280 1400 1195M-10 1262L120 1190 275 1125M-55 816L28 1011 120 1190M-5 165H360L490 190Q570 225 620 230V150L600 90 570 60M30 155L50 130 250 70 330 55M1005 62L1050 130 1100 250 1160 350M1160 340L1230 290Q1260 268 1280 268L1340 273 1400 300"/>
      </g>
      <path class="grey" d="M0 200L58 375" stroke-width="16"/>
      <path class="grey" d="M365 249L467 205C560 163 670 129 775 129 840 129 900 142 957 154" stroke-width="30"/>
      <path d="M360 242L467 199M870 140Q915 146 957 154" fill="none" stroke="#4c5b72" stroke-width="2"/>
      <g class="major">
        <path stroke-width="19" d="M68 388L342 278 358 264M65 388L84 435 124 545"/>
        <path stroke-width="22" d="M257-5L290 88 354 254"/><path stroke-width="18" d="M354 254L374 299 408 391 450 490 461 545"/>
      </g>
      <path d="M245 375L302 350 326 410 268 433z" fill="#045a5b"/>
      <g class="street">
        <text x="112" y="78" transform="rotate(69 112 78)">SIMPSON STREET</text>
        <text x="198" y="86" transform="rotate(71 198 86)">YABA ROAD</text>
        <text x="508" y="518" transform="rotate(-25 508 518)">GLOVER STREET</text>
        <text x="732" y="536" text-anchor="end" transform="rotate(-22 732 536)">STREET</text>
      </g>
      <g class="road"><text x="4" y="264" text-anchor="end" transform="rotate(70 4 264)">WAY</text><text><textPath href="#clinic">CLINIC ROAD LAGOS MAINLAND</textPath></text></g>
      <rect x="7" y="296" width="59" height="47" rx="7" fill="#cdd0d9" stroke="#2f3b4f" stroke-width="2"/>
      <text class="shield" x="36" y="330" text-anchor="middle">A5</text>
      <ellipse cx="511" cy="218" rx="34" ry="22" fill="url(#drop)"/>
      <ellipse cx="480" cy="275" rx="6" ry="3" fill="#1c222c"/><path d="M480 206v68" stroke="#a9abb0" stroke-width="5"/>
      <circle cx="480" cy="190" r="20" fill="#f8402f"/><circle cx="473" cy="184" r="5" fill="#fff"/>
      <rect width="957" height="538" fill="url(#shade)"/>
    </svg>
    <span class="meta"><time>22:26</time><svg class="ticks" aria-label="Delivered"><use href="#ticks"/></svg></span>
    <svg class="tail" aria-hidden="true"><use href="#tail"/></svg>
  </article>

  <article class="bubble in continued">
    <p><svg class="emoji" aria-label="plate"><use href="#plate"/></svg> <b>Cravvingss</b></p>
    <p><svg class="emoji" aria-label="pushpin"><use href="#pushpin"/></svg> Delivering around: <b>your area</b></p>
    <p><svg class="emoji" aria-label="fire"><use href="#fire"/></svg> <b>Hot near you</b></p>
  </article>

  <button class="jump" aria-label="Scroll to latest"><svg viewBox="0 0 38 22" aria-hidden="true"><path d="M3 3l16 16L35 3" fill="none" stroke="#fff" stroke-width="5" stroke-linecap="round" stroke-linejoin="round"/></svg></button>
</main>

<footer class="composer">
  <button class="plus" aria-label="Attach"><svg viewBox="0 0 60 60" aria-hidden="true"><path d="M30 3v54M3 30h54" stroke="#fff" stroke-width="5" stroke-linecap="round"/></svg></button>
  <div class="field">
    <input type="text" aria-label="Message">
    <button class="sticker" aria-label="Stickers"><svg viewBox="0 0 56 56" aria-hidden="true"><path d="M22 2h12q20 0 20 18v10q0 5-4 9L39 50q-4 4-9 4h-8Q2 54 2 36V20Q2 2 22 2zM31 53V41q0-10 11-10h12" fill="none" stroke="#fff" stroke-width="4" stroke-linejoin="round"/></svg></button>
  </div>
  <button class="camera" aria-label="Camera"><svg viewBox="0 0 70 56" aria-hidden="true"><path d="M6 9h15l5-5q2-2 4-2h11q2 0 4 2l5 5h14q4 0 4 4v35q0 4-4 4H6q-4 0-4-4V13q0-4 4-4z" fill="none" stroke="#fff" stroke-width="4"/><circle cx="35" cy="31" r="14" fill="none" stroke="#fff" stroke-width="4"/><circle cx="55" cy="20" r="4" fill="#fff"/></svg></button>
  <button class="mic" aria-label="Voice message"><svg viewBox="0 0 48 70" aria-hidden="true"><rect x="13" y="3" width="22" height="46" rx="11" fill="none" stroke="#fff" stroke-width="4"/><path d="M3 36q2 22 21 22t21-22M24 58v10" fill="none" stroke="#fff" stroke-width="4" stroke-linecap="round"/></svg></button>
</footer>
</body>
</html>
```
FILE: styles.css
```css
* { box-sizing: border-box; }

body {
  margin: 0;
  height: 100vh;
  display: flex;
  flex-direction: column;
  background: #0a0a0a;
  color: #fafafa;
  font-family: Inter, "Liberation Sans", sans-serif;
  font-size: 48px;
  line-height: 66px;
}

p, h1 { margin: 0; }
b { font-weight: 700; }
svg { display: block; flex: none; }

button {
  flex: none;
  padding: 0;
  border: 0;
  background: none;
  color: inherit;
  font: inherit;
}

.sprite { position: absolute; width: 0; height: 0; }

/* Top bar */
.topbar {
  flex: none;
  padding-bottom: 30px;
  background: linear-gradient(to right, #131313 77%, #0f0f0f 81%);
}

.status {
  display: flex;
  align-items: center;
  height: 177px;
  padding: 0 156px 0 139px;
}

.clock { font-size: 53px; font-weight: 600; }
.status-person { width: 36px; height: 38px; margin-left: 12px; }
.wifi { width: 58px; height: 42px; margin-left: auto; }
.battery { width: 94px; height: 44px; margin-left: 22px; }

.contact {
  display: flex;
  align-items: center;
  padding: 0 60px;
}

.back {
  display: flex;
  align-items: center;
  justify-content: center;
  gap: 17px;
  width: 139px;
  height: 132px;
  border: 2px solid #3a3c40;
  border-radius: 66px;
  background: #1e2020;
  font-size: 51px;
}

.back svg { width: 34px; height: 58px; }

.avatar {
  display: grid;
  place-items: center;
  width: 120px;
  height: 120px;
  margin: 0 26px;
  border-radius: 50%;
  background: #35271f;
}

.avatar svg { width: 38px; height: 40px; }

h1 { font-size: 46px; font-weight: 600; }

/* Conversation */
.chat {
  position: relative;
  flex: 1;
  min-height: 0;
  display: flex;
  flex-direction: column;
  align-items: flex-start;
  gap: 40px;
  padding: 40px 50px 0;
  overflow: hidden;
}

.wallpaper {
  position: absolute;
  inset: 0;
  width: 100%;
  height: 100%;
  fill: none;
  stroke: #282a2a;
  stroke-width: 2px;
  stroke-linecap: round;
  stroke-linejoin: round;
}

.wallpaper path, .wallpaper circle, .wallpaper ellipse,
.wallpaper rect, .wallpaper text { vector-effect: non-scaling-stroke; }
.wallpaper text { font-size: 150px; font-weight: 700; }
.wallpaper .small { font-size: 22px; font-weight: 400; stroke-width: 1px; }

.day {
  position: relative;
  align-self: center;
  padding: 0 29px;
  border-radius: 28px;
  background: #161616;
  font-size: 39px;
  font-weight: 600;
  line-height: 56px;
}

.day + .bubble { margin-top: 3px; }

.bubble {
  position: relative;
  flex: none;
  max-width: 100%;
  padding: 14px 29px;
  border-radius: 36px;
}

.in { width: 968px; background: #242626; }
.in p + p { margin-top: 66px; }
.out { align-self: flex-end; background: #144d37; }
.continued { padding-bottom: 80px; }

.short {
  display: flex;
  gap: 37px;
}

.short p { padding-bottom: 7px; }
.short .meta { align-self: flex-end; }

.meta {
  display: flex;
  align-items: center;
  justify-content: flex-end;
  gap: 10px;
  color: #a1a6a8;
  font-size: 36px;
  line-height: 44px;
}

.in .meta { margin-top: 13px; }
.ticks { width: 46px; height: 30px; }

.tail {
  position: absolute;
  right: -17px;
  bottom: 0;
  width: 36px;
  height: 40px;
  fill: #144d37;
}

.in .tail {
  right: auto;
  left: -17px;
  transform: scaleX(-1);
  fill: #242626;
}

.emoji {
  display: inline-block;
  width: 68px;
  height: 66px;
  margin: -14px 0;
}

/* Shared location */
.location { width: 977px; padding: 10px; }

.map {
  width: 100%;
  height: auto;
  border-radius: 28px;
}

.minor path {
  fill: none;
  stroke: #66758f;
  stroke-width: 10px;
  stroke-linecap: round;
  stroke-linejoin: round;
  vector-effect: non-scaling-stroke;
}

.grey { fill: none; stroke: #6f7e92; }
.major { fill: none; stroke: #7c8ba9; stroke-linejoin: round; }

.street, .road {
  fill: #cfd3dd;
  stroke: #2f3b4f;
  stroke-width: 5px;
  stroke-linejoin: round;
  paint-order: stroke;
}

.street { font-size: 26px; font-weight: 500; }
.road { font-size: 32px; font-weight: 600; }
.shield { fill: #2b2d31; font-size: 28px; font-weight: 700; }

.location .meta {
  position: absolute;
  right: 28px;
  bottom: 24px;
}

.location time { color: #fff; }

.jump {
  position: absolute;
  right: 27px;
  bottom: 72px;
  display: grid;
  place-items: center;
  width: 96px;
  height: 96px;
  border-radius: 50%;
  background: #242626;
}

.jump svg { width: 38px; height: 22px; }

/* Composer */
.composer {
  flex: none;
  display: flex;
  align-items: center;
  padding: 30px 51px 126px 40px;
  background: linear-gradient(to right, #131313 77%, #0f0f0f 81%);
}

.plus svg { width: 60px; height: 60px; }

.field {
  flex: 1;
  min-width: 0;
  display: flex;
  align-items: center;
  height: 90px;
  margin: 0 56px 0 41px;
  padding: 0 34px;
  border: 1px solid #34363c;
  border-radius: 45px;
  background: #2b2b2b;
}

.field input {
  flex: 1;
  min-width: 0;
  border: 0;
  outline: 0;
  background: none;
  color: inherit;
  font: inherit;
}

.sticker svg { width: 56px; height: 56px; }
.camera svg { width: 70px; height: 56px; }
.mic { margin-left: 57px; }
.mic svg { width: 48px; height: 70px; }
```
